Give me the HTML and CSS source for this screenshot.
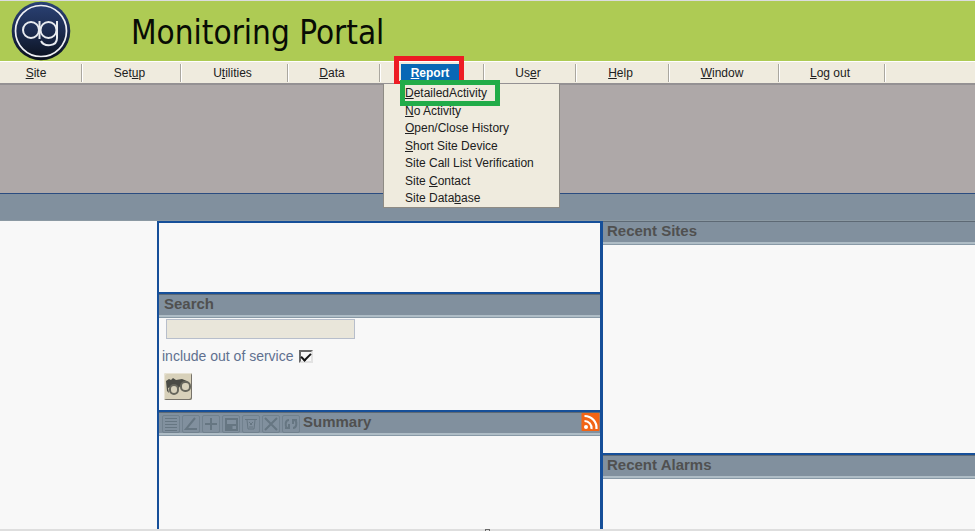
FILE: index.html
```html
<!DOCTYPE html>
<html lang="en">
<head>
<meta charset="utf-8">
<title>Monitoring Portal</title>
<link rel="stylesheet" href="styles.css">
</head>
<body>
<header class="banner">
  <svg class="logo" viewBox="0 0 60 60" role="img" aria-label="ag">
    <defs><linearGradient id="navy" x1="0" y1="0" x2="0" y2="1"><stop offset="0" stop-color="#2b4275"/><stop offset=".5" stop-color="#1c2c50"/><stop offset="1" stop-color="#0a101c"/></linearGradient></defs>
    <circle cx="30" cy="30" r="29.300" fill="url(#navy)"/>
    <circle cx="30" cy="30" r="25.500" fill="none" stroke="#f0f1f5" stroke-width="1.700"/>
    <g fill="none" stroke="#e8ebf0" stroke-width="2">
      <circle cx="20" cy="29" r="8"/>
      <path d="M28.500 20v18"/>
      <circle cx="37.500" cy="29" r="8"/>
      <path d="M46 20v17c0 9-13 9-16 3"/>
    </g>
  </svg>
  <h1>Monitoring Portal</h1>
</header>
<nav class="menubar">
  <div class="item first"><button><u>S</u>ite</button></div>
  <div class="item"><button>Set<u>u</u>p</button></div>
  <div class="item"><button>U<u>t</u>ilities</button></div>
  <div class="item"><button><u>D</u>ata</button></div>
  <div class="item">
    <button class="open"><u>R</u>eport</button>
    <ul class="dropdown">
      <li><a class="marked" href="#"><u>D</u>etailedActivity</a></li>
      <li><a href="#"><u>N</u>o Activity</a></li>
      <li><a href="#"><u>O</u>pen/Close History</a></li>
      <li><a href="#"><u>S</u>hort Site Device</a></li>
      <li><a href="#">Site Call List Verification</a></li>
      <li><a href="#">Site <u>C</u>ontact</a></li>
      <li><a href="#">Site Data<u>b</u>ase</a></li>
    </ul>
  </div>
  <div class="item"><button>Us<u>e</u>r</button></div>
  <div class="item"><button><u>H</u>elp</button></div>
  <div class="item"><button><u>W</u>indow</button></div>
  <div class="item"><button><u>L</u>og out</button></div>
</nav>
<div class="backdrop"></div>
<div class="strip"></div>
<main class="workspace">
  <div class="side"></div>
  <div class="center">
    <section class="blank"></section>
    <section class="search">
      <h2 class="bar">Search</h2>
      <form class="form">
        <input class="query" type="text" aria-label="Search">
        <label class="option">include out of service <input type="checkbox" checked></label>
        <button class="find" type="button" aria-label="Find">
          <svg viewBox="0 0 28 27">
            <path d="M2 8l3-2 2 1 2-2 3 2 6-1 5 2 2 4-8 0-3 4-5-3-5 2 1 5-2-2z" fill="#4a4b45"/>
            <rect x="6" y="12" width="8" height="9" rx="4" fill="#d8d2bc" stroke="#66665c" stroke-width="2"/>
            <rect x="17" y="9" width="9" height="9" rx="4" fill="#d8d2bc" stroke="#66665c" stroke-width="2"/>
          </svg>
        </button>
      </form>
    </section>
    <section class="summary">
      <div class="bar tools">
        <button aria-label="List"><svg viewBox="0 0 16 16"><path d="M2 2.500h12M2 5.500h12M2 8.500h12M2 11.500h12M2 14.500h12"/></svg></button>
        <button aria-label="Edit"><svg viewBox="0 0 16 16"><path d="M12 2L3 13h11" stroke-width="2"/></svg></button>
        <button aria-label="Add"><svg viewBox="0 0 16 16"><path d="M2 8h12M8 2v12" stroke-width="2"/></svg></button>
        <button aria-label="Save"><svg viewBox="0 0 16 16"><path d="M3 3h11v11H3zM3 9h11" stroke-width="2"/><path d="M4 9h5v5H4z" fill="#667682"/></svg></button>
        <button aria-label="Delete"><svg viewBox="0 0 16 16"><path d="M2 3.500h12M4 4l1 9h6l1-9M6 6l3 3M10 6l-3 3M6 11h4"/></svg></button>
        <button aria-label="Cancel"><svg viewBox="0 0 16 16"><path d="M2 2l12 12M14 2L2 14" stroke-width="2"/></svg></button>
        <button aria-label="Refresh"><svg viewBox="0 0 16 16"><path d="M6 4C2 4 2 10 4 12M2 12h4v-4M10 12c4 0 4-6 2-8M14 4h-4v4" stroke-width="2"/></svg></button>
        <h2>Summary</h2>
        <a class="feed" href="#" aria-label="Feed">
          <svg viewBox="0 0 18 18"><rect width="18" height="18" rx="1" fill="#f26415"/><circle cx="4.500" cy="14" r="2" fill="#fff"/><path d="M3 8a7 7 0 0 1 7 8M3 3a12 12 0 0 1 12 13" fill="none" stroke="#fff" stroke-width="2.200"/></svg>
        </a>
      </div>
    </section>
  </div>
  <div class="right">
    <section><h2 class="bar">Recent Sites</h2></section>
    <section class="alarms"><h2 class="bar">Recent Alarms</h2></section>
  </div>
</main>
<footer class="edge"><span class="grip"></span></footer>
</body>
</html>
```
FILE: styles.css
```css
* { box-sizing: border-box; }
body {
  margin: 0;
  min-height: 100vh;
  display: flex;
  flex-direction: column;
  background: #f8f8f8;
  font: 13px/18px "Liberation Sans", Arial, sans-serif;
}
h1, h2 { margin: 0; }
button { font: inherit; color: inherit; padding: 0; border: 0; background: none; }
svg { display: block; }

.banner {
  display: flex;
  align-items: center;
  gap: 60px;
  height: 61px;
  padding-left: 11px;
  border-top: 1px solid #dcdce0;
  background: #aecb54;
}
.logo { width: 60px; height: 60px; }
h1 { padding-top: 3px; font: 33px/40px "DejaVu Sans Condensed", "DejaVu Sans", sans-serif; color: #080c04; }

.menubar {
  display: grid;
  grid-template-columns: 82px 99px 107px 92px 104px 92px 93px 110px 106px;
  height: 24px;
  padding: 2px 0;
  background: #efebde;
  border-top: 1px solid #fff;
  border-bottom: 2px solid #949193;
  font-size: 12px;
  color: #202020;
}
.item {
  position: relative;
  display: flex;
  align-items: center;
  justify-content: center;
  padding-right: 3px;
  border-right: 1px solid #aaa79f;
  box-shadow: 1px 0 #fff;
}
.first { padding-right: 9px; }
.open { width: 58px; background: #0867b5; color: #fff; font-weight: bold; }
.open::after {
  content: "";
  position: absolute;
  inset: -8px 19px -4px 14px;
  border: 5px solid #ed1c24;
}
.dropdown {
  position: absolute;
  z-index: 1;
  top: 20px;
  left: 3px;
  display: grid;
  grid-auto-rows: 1fr;
  width: 177px;
  height: 124px;
  margin: 0;
  padding: 0 0 0 21px;
  list-style: none;
  line-height: 18px;
  background: #efebde;
  border: 1px solid #8e8b84;
  border-top: 0;
  white-space: nowrap;
}
.dropdown a { color: #202020; text-decoration: none; }
.dropdown li { min-height: 0; }
.marked { position: relative; }
.marked::after {
  content: "";
  position: absolute;
  inset: -6px -13px -6px -5px;
  border: 5px solid #22ac49;
}

.backdrop { height: 108px; background: #aea8a8; }
.strip { height: 28px; background: #81909e; border-top: 1px solid #2a4c80; border-bottom: 1px solid #8b99a3; }

.workspace { flex: 1; display: grid; grid-template-columns: 157px 446px 1fr; }
.center { border: 2px solid #164f99; border-width: 2px 3px 0 2px; }
.blank { height: 69px; }
.search, .summary, .alarms { border-top: 2px solid #164f99; }
.bar {
  height: 23px;
  padding-left: 5px;
  font-size: 15px;
  line-height: 18px;
  font-weight: bold;
  color: #505050;
  background: #81909e;
  border-top: 1px solid #5d6974;
  border-bottom: 2px solid #afbdc6;
  box-shadow: 0 1px #8899a6;
}
.form {
  display: flex;
  flex-direction: column;
  align-items: flex-start;
  gap: 8px;
  height: 93px;
  padding: 2px 3px;
}
.query { width: 189px; height: 20px; margin-left: 4px; background: #e9e6da; border: 1px solid #b7becb; }
.option { display: flex; align-items: center; gap: 5px; font-size: 14px; color: #60708f; }
.option input {
  appearance: none;
  display: grid;
  place-items: center;
  width: 14px;
  height: 13px;
  margin: 0;
  background: #f8f8f8;
  border: 2px solid;
  border-color: #686868 #e2e2e2 #e2e2e2 #686868;
}
.option input::before {
  content: "";
  width: 8px;
  height: 4px;
  border: solid #151515;
  border-width: 0 0 2px 2px;
  transform: rotate(-45deg);
}
.find {
  width: 28px;
  height: 27px;
  margin-left: 2px;
  background: #d8d1ba;
  border-radius: 2px;
  box-shadow: inset 1px 1px #e8e3d4, inset -1px -1px #77736a;
}
.tools { display: flex; gap: 2px; padding-left: 3px; }
.tools button { width: 18px; height: 18px; margin-top: 2px; border: 1px solid #71818e; border-radius: 2px; }
.tools button svg { width: 16px; height: 16px; fill: none; stroke: #667682; }
.tools h2 { margin-left: 1px; font-size: 15px; }
.feed { margin-left: auto; }
.feed svg { width: 19px; height: 18px; }

.right { display: grid; grid-template-rows: 232px 1fr; }
.right .bar { padding-left: 4px; }

.edge { height: 2px; background: #dedede; }
.grip { display: block; width: 5px; height: 2px; margin: 0 auto; border: 1px solid #686868; border-bottom: 0; }
```
